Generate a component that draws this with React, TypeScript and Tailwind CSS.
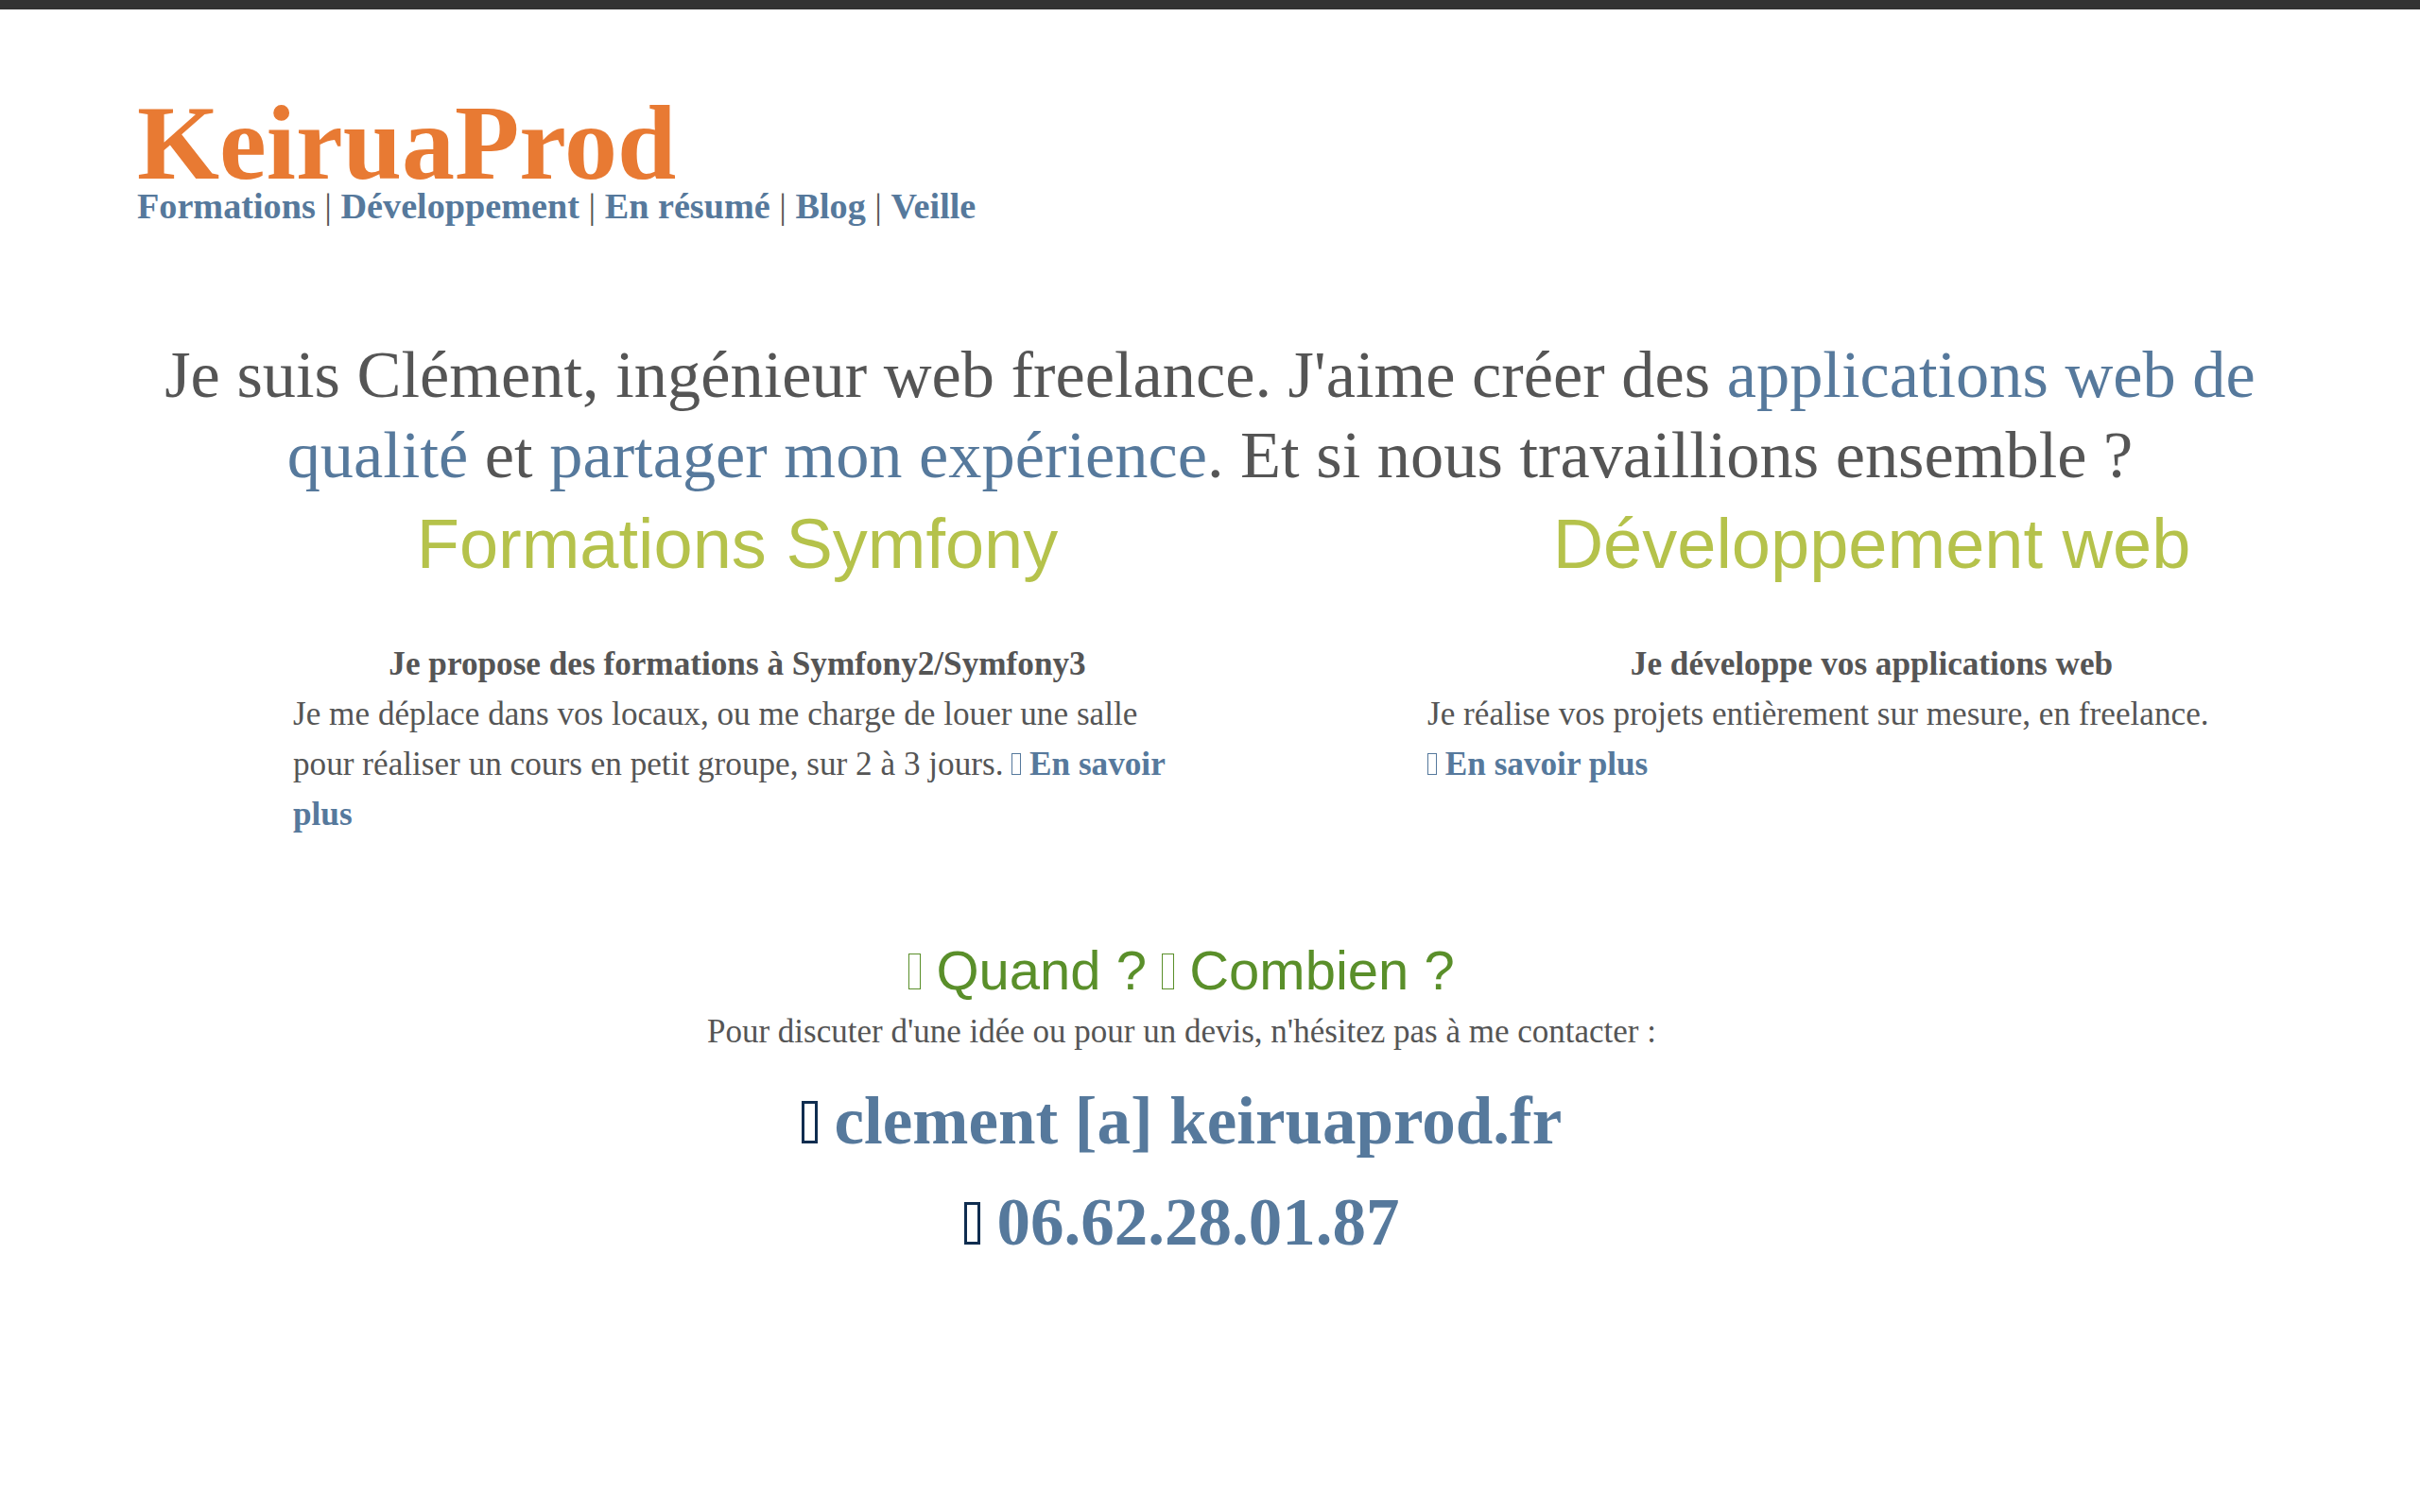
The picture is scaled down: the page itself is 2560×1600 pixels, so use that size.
import React from "react";

// missing icon-font glyph, drawn as the empty box the browser shows
function Tofu({ className }: { className: string }) {
  return <span className={"inline-block align-baseline " + className} />;
}

const navItems = ["Formations", "Développement", "En résumé", "Blog", "Veille"];

export default function App() {
  return (
    <div className="min-h-[1600px] w-full overflow-hidden bg-white font-['Liberation_Serif',serif] text-[#555555]">
      <div className="h-[10px] bg-[#333333]" />

      {/* Header */}
      <header className="pl-[145px]">
        <h1 className="mt-[103px] text-[112px] font-bold leading-[76px] text-[#e87a33]">KeiruaProd</h1>
        <nav className="mt-[6px] text-[38.2px] leading-[46px]">
          {navItems.map((item, i) => (
            <React.Fragment key={item}>
              {i > 0 && <span className="text-[#555555]"> | </span>}
              <a href="#" className="font-bold text-[#56799c]">
                {item}
              </a>
            </React.Fragment>
          ))}
        </nav>
      </header>

      {/* Intro */}
      <p className="mt-[113px] px-[150px] text-center text-[70.4px] leading-[85px]">
        Je suis Clément, ingénieur web freelance. J'aime créer des{" "}
        <a href="#" className="text-[#56799c]">applications web de qualité</a> et{" "}
        <a href="#" className="text-[#56799c]">partager mon expérience</a>. Et si nous travaillions ensemble ?
      </p>

      {/* Services */}
      <div className="flex gap-[260px] pl-[310px]">
        <section className="w-[940px]">
          <h2 className="mt-[8px] text-center font-['Liberation_Sans',Arial,sans-serif] text-[74px] leading-[88px] text-[#b5c24b]">
            Formations Symfony
          </h2>
          <h3 className="mt-[56px] text-center text-[35.2px] font-bold leading-[53px]">
            Je propose des formations à Symfony2/Symfony3
          </h3>
          <p className="text-[35.2px] leading-[53px]">
            Je me déplace dans vos locaux, ou me charge de louer une salle pour réaliser un cours en petit groupe, sur 2 à 3 jours.{" "}
            <a href="#" className="font-bold text-[#56799c]">
              <Tofu className="h-[23px] w-[10px] border-[1.5px] border-[#56799c]" /> En savoir plus
            </a>
          </p>
        </section>
        <section className="w-[940px]">
          <h2 className="mt-[8px] text-center font-['Liberation_Sans',Arial,sans-serif] text-[74px] leading-[88px] text-[#b5c24b]">
            Développement web
          </h2>
          <h3 className="mt-[56px] text-center text-[35.2px] font-bold leading-[53px]">
            Je développe vos applications web
          </h3>
          <p className="text-[35.2px] leading-[53px]">
            Je réalise vos projets entièrement sur mesure, en freelance.
            <br />
            <a href="#" className="font-bold text-[#56799c]">
              <Tofu className="h-[23px] w-[10px] border-[1.5px] border-[#56799c]" /> En savoir plus
            </a>
          </p>
        </section>
      </div>

      {/* Contact */}
      <section className="w-[2500px] text-center">
        <h2 className="mt-[104px] font-['Liberation_Sans',Arial,sans-serif] text-[58px] leading-[70px] text-[#5a8f2a]">
          <Tofu className="h-[38px] w-[13px] border-[1.5px] border-[#5a8f2a]" /> Quand ?{" "}
          <Tofu className="h-[38px] w-[13px] border-[1.5px] border-[#5a8f2a]" /> Combien ?
        </h2>
        <p className="mt-[4px] text-[35px] leading-[52px]">
          Pour discuter d'une idée ou pour un devis, n'hésitez pas à me contacter :
        </p>
        <p className="mt-[15px] text-[71px] font-bold leading-[107px] text-[#56799c]">
          <Tofu className="h-[45px] w-[17px] border-[3px] border-[#0f2d50]" /> clement [a] keiruaprod.fr
        </p>
        <p className="text-[71px] font-bold leading-[107px] text-[#56799c]">
          <Tofu className="h-[45px] w-[17px] border-[3px] border-[#0f2d50]" /> 06.62.28.01.87
        </p>
      </section>
    </div>
  );
}
